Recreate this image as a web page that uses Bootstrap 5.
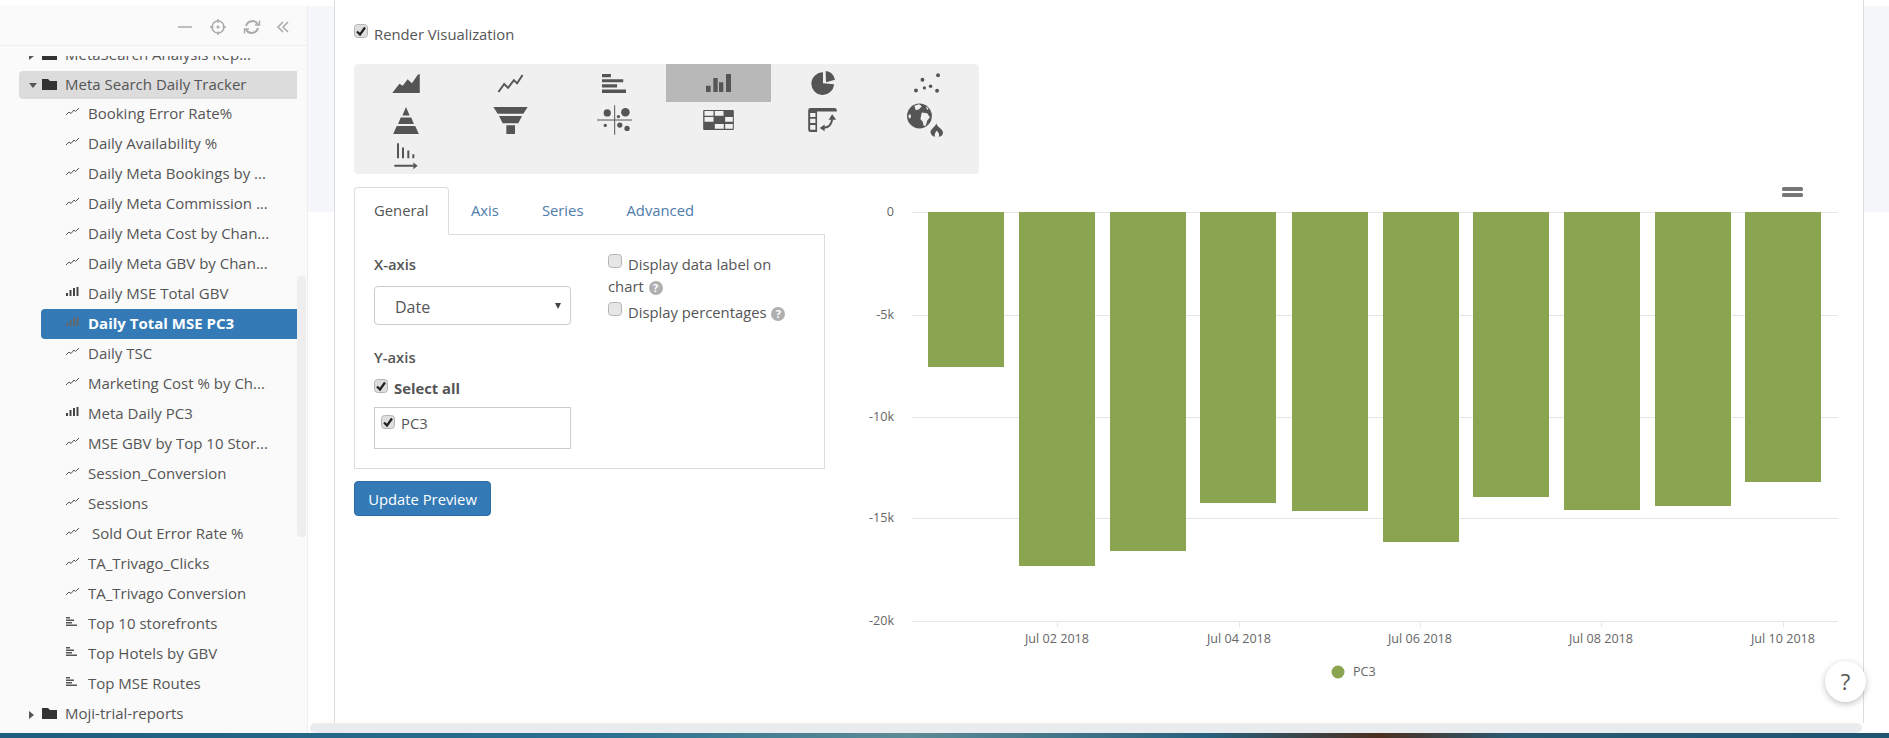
<!DOCTYPE html>
<html lang="en">
<head>
<meta charset="utf-8">
<title>Render Visualization</title>
<link href="https://cdn.jsdelivr.net/npm/bootstrap@5.3.0/dist/css/bootstrap.min.css" rel="stylesheet">
<style>
html,body{height:100%;overflow:hidden;}
body{font-family:"Open Sans","Noto Sans",sans-serif;font-size:14.8px;color:#555;background:#fff;}
.page-shell{height:738px;}
.upper{height:733px;}
.side-pane{width:308px;margin-top:6px;background:#fafafa;border-right:1px solid #eee;position:relative;}
.side-head{height:40px;border-bottom:1px solid #eee;padding:3px 17px 0 0;justify-content:flex-end;}
.side-head svg{display:block;}
.tree-clip{margin-top:10px;height:676px;width:297px;overflow:hidden;}
.tree-inner{margin-top:-16px;}
.tree-row{height:30px;color:#555;white-space:nowrap;font-size:15px;padding-bottom:2px;}
.folder-row{padding-left:10px;margin-left:19px;}
.folder-row.open{background:#dcdcdc;border-radius:4px 0 0 4px;height:28px;margin-top:1px;}
.caret-box{width:13px;flex:none;}
.folder-ico{margin-right:8px;flex:none;}
.leaf-row{padding-left:66px;}
.leaf-ico{width:13px;flex:none;margin-right:9px;margin-top:-3px;}
.leaf-ico.short-ico{width:11px;margin-right:11px;}
.leaf-row.picked{background:#337ab7;color:#fff;font-weight:700;border-radius:4px 0 0 4px;margin-left:41px;padding-left:25px;}
.pad-space{padding-left:4px;}
.side-thumb{position:absolute;left:297px;top:270px;width:9px;height:261px;background:#eee;border-radius:4px;}
.gutter{width:26px;margin-top:6px;flex:none;}
.gutter.end{width:25px;}
.band{height:206px;background:#f5f7fa;}
.main-pane{width:1530px;flex:none;border-left:1px solid #ddd;border-right:1px solid #ddd;padding:24px 0 0 19px;overflow:hidden;}
.render-row{height:20px;margin-bottom:20px;}
.render-row .form-check-input{margin:-6px 6px 0 0;}
.form-check-input{width:14px;height:14px;border:1px solid #b5b5b5;border-radius:3px;background-color:#e6e6e6;flex:none;box-shadow:none;}
.form-check-input:checked{background-color:#dedede;border-color:#b5b5b5;background-image:url("data:image/svg+xml,%3Csvg xmlns='http://www.w3.org/2000/svg' viewBox='0 0 14 14'%3E%3Cpath d='M3 7.500l3 3 5-7' fill='none' stroke='%23222' stroke-width='2.2'/%3E%3C/svg%3E");background-size:14px 14px;}
.type-panel{width:625px;height:110px;background:#f0f0f0;border-radius:4px;grid-template-columns:repeat(6,1fr);grid-template-rows:38px 36px 36px;margin-bottom:6px;display:grid;}
.type-cell{display:flex;align-items:center;justify-content:center;}
.type-cell.active-type{background:#b8b8b8;}
.type-cell svg{fill:#555;display:block;}
.globe-ico{margin-right:4px;}
.work-row{height:540px;}
.config-col{width:471px;flex:none;padding-top:7px;}
.nav-tabs{border-bottom:none;height:47px;margin-bottom:0;position:relative;z-index:1;}
.nav-tabs .nav-link{font-size:14.8px;color:#4f7bab;padding:11px 19px 0 19px;height:47px;border-radius:4px 4px 0 0;border:1px solid transparent;margin:0;}
.nav-tabs .nav-link.active{color:#555;border-color:#ddd #ddd #fff;width:95px;height:48px;background:#fff;}
.nav-tabs .nav-item.gap-tab{margin-left:2px;}
.nav-tabs .nav-item.gap-tab2{margin-left:3px;}
.tab-box{height:235px;border:1px solid #ddd;padding:19px;}
.left-form{width:197px;flex:none;}
.right-form{margin-left:37px;margin-top:-1px;width:190px;}
.field-title{font-weight:600;line-height:20px;color:#555;}
.axis-select{height:39px;border:1px solid #ccc;border-radius:4px;margin-top:12px;padding:2px 0 0 20px;font-size:16px;background:#fff;position:relative;}
.axis-select::after{content:"";position:absolute;right:9px;top:16px;border-left:3.5px solid transparent;border-right:3.5px solid transparent;border-top:6px solid #444;}
.y-title{margin-top:22px;}
.select-all{margin-top:13px;height:17px;font-weight:700;gap:6px;}
.select-all .form-check-input{margin:-5px 0 0 0;}
.series-box{height:42px;border:1px solid #ccc;margin-top:10px;padding:7px 6px;gap:6px;align-items:flex-start;}
.series-box .form-check-input{margin:0;}
.series-name{line-height:1;margin-top:1px;}
.opt-line{line-height:22px;}
.opt-line .form-check-input{margin:0 6px 0 0;vertical-align:-1px;position:relative;top:-3px;}
.opt-two{margin-top:4px;}
.help-dot{display:inline-block;width:14px;height:14px;border-radius:50%;background:#b0b0b0;color:#fff;font-size:11px;line-height:14px;font-weight:700;text-align:center;margin-left:1px;}
.btn-update{--bs-btn-bg:#337ab7;--bs-btn-border-color:#2e6da4;--bs-btn-hover-bg:#286090;font-size:14.8px;width:137px;height:35px;margin-top:12px;padding:1px 0 0;border-radius:4px;}
.chart-col{margin-left:35px;width:1000px;flex:none;}
.chart-col svg{display:block;}
.chart-col text{font-family:"Open Sans","Noto Sans",sans-serif;font-size:12.6px;fill:#666;}
.help-fab{position:absolute;left:1825px;top:661px;width:41px;height:41px;border-radius:50%;background:#fff;box-shadow:0 2px 6px rgba(0,0,0,.25);font-size:22px;color:#555;}
.h-scroll{height:10px;background:#e8ecef;border-top:1px solid #f5ecea;width:1552px;margin-left:2px;border-radius:5px;}
.right-stack{width:1581px;flex:none;}
.top-stack{height:723px;}
.photo-strip{height:5px;background:linear-gradient(90deg,#1d5d7d 0%,#2a7090 32%,#5d8b96 48%,#27607c 64%,#4a2f20 73%,#2b5a72 80%,#1d5470 100%);}
</style>
</head>
<body>
<div class="page-shell d-flex flex-column position-relative">
 <div class="upper d-flex">
  <aside class="side-pane flex-shrink-0">
   <div class="side-head d-flex align-items-center">
    <svg width="120" height="16" viewBox="0 0 120 16" fill="none" stroke="#aaa" stroke-width="1.5">
     <path d="M8 8h14"/>
     <circle cx="48" cy="8" r="6"/><path d="M48 6.500v3M46.500 8h3"/><path d="M48 0v3.500M48 12.500v3.500M40 8h3.500M52.500 8h3.500"/>
     <path d="M88 5.500A6.500 6.500 0 0 0 76 7M76 10.500A6.500 6.500 0 0 0 88 9" stroke-width="2"/><path d="M85 6h4.500V1.500M79 10h-4.500v4.500" stroke-width="1.500"/>
     <path d="M113 3l-5 5 5 5M118 3l-5 5 5 5"/>
    </svg>
   </div>
   <div class="tree-clip">
    <div class="tree-inner">
     <div class="tree-row folder-row d-flex align-items-center"><span class="caret-box"><svg width="6" height="8" viewBox="0 0 6 8"><path d="M0 0l5 4-5 4z" fill="#555"/></svg></span><svg class="folder-ico" width="15" height="12" viewBox="0 0 15 12"><path d="M0 1h6l2 2h7v9H0z" fill="#333"/></svg>MetaSearch Analysis Rep...</div>
     <div class="tree-row folder-row open d-flex align-items-center"><span class="caret-box"><svg width="8" height="6" viewBox="0 0 8 6"><path d="M0 0h8L4 5z" fill="#555"/></svg></span><svg class="folder-ico" width="15" height="12" viewBox="0 0 15 12"><path d="M0 1h6l2 2h7v9H0z" fill="#333"/></svg>Meta Search Daily Tracker</div>
     <div class="tree-row leaf-row d-flex align-items-center"><svg class="leaf-ico" width="13" height="8" viewBox="0 0 13 8" fill="none" stroke="#555"><path d="M0 7l3-3 2 1.500L8 2l1.500 1.500L13 0"/></svg>Booking Error Rate%</div>
     <div class="tree-row leaf-row d-flex align-items-center"><svg class="leaf-ico" width="13" height="8" viewBox="0 0 13 8" fill="none" stroke="#555"><path d="M0 7l3-3 2 1.500L8 2l1.500 1.500L13 0"/></svg>Daily Availability %</div>
     <div class="tree-row leaf-row d-flex align-items-center"><svg class="leaf-ico" width="13" height="8" viewBox="0 0 13 8" fill="none" stroke="#555"><path d="M0 7l3-3 2 1.500L8 2l1.500 1.500L13 0"/></svg>Daily Meta Bookings by ...</div>
     <div class="tree-row leaf-row d-flex align-items-center"><svg class="leaf-ico" width="13" height="8" viewBox="0 0 13 8" fill="none" stroke="#555"><path d="M0 7l3-3 2 1.500L8 2l1.500 1.500L13 0"/></svg>Daily Meta Commission ...</div>
     <div class="tree-row leaf-row d-flex align-items-center"><svg class="leaf-ico" width="13" height="8" viewBox="0 0 13 8" fill="none" stroke="#555"><path d="M0 7l3-3 2 1.500L8 2l1.500 1.500L13 0"/></svg>Daily Meta Cost by Chan...</div>
     <div class="tree-row leaf-row d-flex align-items-center"><svg class="leaf-ico" width="13" height="8" viewBox="0 0 13 8" fill="none" stroke="#555"><path d="M0 7l3-3 2 1.500L8 2l1.500 1.500L13 0"/></svg>Daily Meta GBV by Chan...</div>
     <div class="tree-row leaf-row d-flex align-items-center"><svg class="leaf-ico" width="13" height="9" viewBox="0 0 13 9" fill="#444"><path d="M0 6h2v3H0zM3.500 3h2v6h-2zM7 1h2v8H7zM10.500 0h2v9h-2z"/></svg>Daily MSE Total GBV</div>
     <div class="tree-row leaf-row picked d-flex align-items-center"><svg class="leaf-ico" width="13" height="9" viewBox="0 0 13 9" fill="#666"><path d="M0 6h2v3H0zM3.500 3h2v6h-2zM7 1h2v8H7zM10.500 0h2v9h-2z"/></svg>Daily Total MSE PC3</div>
     <div class="tree-row leaf-row d-flex align-items-center"><svg class="leaf-ico" width="13" height="8" viewBox="0 0 13 8" fill="none" stroke="#555"><path d="M0 7l3-3 2 1.500L8 2l1.500 1.500L13 0"/></svg>Daily TSC</div>
     <div class="tree-row leaf-row d-flex align-items-center"><svg class="leaf-ico" width="13" height="8" viewBox="0 0 13 8" fill="none" stroke="#555"><path d="M0 7l3-3 2 1.500L8 2l1.500 1.500L13 0"/></svg>Marketing Cost % by Ch...</div>
     <div class="tree-row leaf-row d-flex align-items-center"><svg class="leaf-ico" width="13" height="9" viewBox="0 0 13 9" fill="#444"><path d="M0 6h2v3H0zM3.500 3h2v6h-2zM7 1h2v8H7zM10.500 0h2v9h-2z"/></svg>Meta Daily PC3</div>
     <div class="tree-row leaf-row d-flex align-items-center"><svg class="leaf-ico" width="13" height="8" viewBox="0 0 13 8" fill="none" stroke="#555"><path d="M0 7l3-3 2 1.500L8 2l1.500 1.500L13 0"/></svg>MSE GBV by Top 10 Stor...</div>
     <div class="tree-row leaf-row d-flex align-items-center"><svg class="leaf-ico" width="13" height="8" viewBox="0 0 13 8" fill="none" stroke="#555"><path d="M0 7l3-3 2 1.500L8 2l1.500 1.500L13 0"/></svg>Session_Conversion</div>
     <div class="tree-row leaf-row d-flex align-items-center"><svg class="leaf-ico" width="13" height="8" viewBox="0 0 13 8" fill="none" stroke="#555"><path d="M0 7l3-3 2 1.500L8 2l1.500 1.500L13 0"/></svg>Sessions</div>
     <div class="tree-row leaf-row d-flex align-items-center"><svg class="leaf-ico" width="13" height="8" viewBox="0 0 13 8" fill="none" stroke="#555"><path d="M0 7l3-3 2 1.500L8 2l1.500 1.500L13 0"/></svg><span class="pad-space">Sold Out Error Rate %</span></div>
     <div class="tree-row leaf-row d-flex align-items-center"><svg class="leaf-ico" width="13" height="8" viewBox="0 0 13 8" fill="none" stroke="#555"><path d="M0 7l3-3 2 1.500L8 2l1.500 1.500L13 0"/></svg>TA_Trivago_Clicks</div>
     <div class="tree-row leaf-row d-flex align-items-center"><svg class="leaf-ico" width="13" height="8" viewBox="0 0 13 8" fill="none" stroke="#555"><path d="M0 7l3-3 2 1.500L8 2l1.500 1.500L13 0"/></svg>TA_Trivago Conversion</div>
     <div class="tree-row leaf-row d-flex align-items-center"><svg class="leaf-ico short-ico" width="11" height="9" viewBox="0 0 11 9" fill="#555"><path d="M0 0h4v1.500H0zM0 2.500h8V4H0zM0 5h6v1.500H0zM0 7.500h11V9H0z"/></svg>Top 10 storefronts</div>
     <div class="tree-row leaf-row d-flex align-items-center"><svg class="leaf-ico short-ico" width="11" height="9" viewBox="0 0 11 9" fill="#555"><path d="M0 0h4v1.500H0zM0 2.500h8V4H0zM0 5h6v1.500H0zM0 7.500h11V9H0z"/></svg>Top Hotels by GBV</div>
     <div class="tree-row leaf-row d-flex align-items-center"><svg class="leaf-ico short-ico" width="11" height="9" viewBox="0 0 11 9" fill="#555"><path d="M0 0h4v1.500H0zM0 2.500h8V4H0zM0 5h6v1.500H0zM0 7.500h11V9H0z"/></svg>Top MSE Routes</div>
     <div class="tree-row folder-row d-flex align-items-center"><span class="caret-box"><svg width="6" height="8" viewBox="0 0 6 8"><path d="M0 0l5 4-5 4z" fill="#555"/></svg></span><svg class="folder-ico" width="15" height="12" viewBox="0 0 15 12"><path d="M0 1h6l2 2h7v9H0z" fill="#333"/></svg>Moji-trial-reports</div>
    </div>
   </div>
   <div class="side-thumb"></div>
  </aside>
  <div class="right-stack d-flex flex-column">
   <div class="top-stack d-flex">
    <div class="gutter"><div class="band"></div></div>
    <main class="main-pane">
     <div class="render-row d-flex align-items-center">
      <input class="form-check-input" type="checkbox" checked aria-label="Render Visualization"><span>Render Visualization</span>
     </div>
     <div class="type-panel">
      <div class="type-cell"><svg width="28" height="19" viewBox="128 42 84 58"><path d="M128 100l22-28 10 6 15-20 13 12 18-26 6-2v58z"/></svg></div>
      <div class="type-cell"><svg width="27" height="19" viewBox="441 41 81 59"><path d="M444 97l18-25 12 12 18-24 10 10 17-26" fill="none" stroke="#555" stroke-width="6"/></svg></div>
      <div class="type-cell"><svg width="24" height="19" viewBox="755 43 70 55"><path d="M755 43h26v9h-26zM755 58h62v9h-62zM755 73h44v9h-44zM755 88h70v10h-70z"/></svg></div>
      <div class="type-cell active-type"><svg width="25" height="18" viewBox="168 43 75 54"><path d="M168 78h14v19h-14zM190 55h13v42h-13zM207 68h13v29h-13zM228 43h15v54h-15z"/></svg></div>
      <div class="type-cell"><svg width="24" height="24" viewBox="481 34 72 72"><path d="M517 38a34 34 0 1 0 33 36l-33-3zM525 34q22 2 28 26l-27 8z"/></svg></div>
      <div class="type-cell"><svg width="26" height="20" viewBox="789 40 80 60"><circle cx="863" cy="46" r="6"/><circle cx="815" cy="60" r="6"/><circle cx="840" cy="80" r="5.500"/><circle cx="821" cy="85" r="5"/><circle cx="795" cy="93" r="6"/><circle cx="860" cy="94" r="6"/></svg></div>
      <div class="type-cell"><svg width="26" height="27" viewBox="130 140 78 82"><path d="M169 140l11 26h-22zM153 172h32l8 20h-48zM141 198h56l11 24h-78z"/></svg></div>
      <div class="type-cell"><svg width="35" height="27" viewBox="430 145 103 81"><path d="M430 145h103l-13 20h-77zM447 172h69l-11 22h-47zM469 200h26v26h-26z"/></svg></div>
      <div class="type-cell"><svg width="35" height="30" viewBox="740 137 106 89"><path d="M792 137h3v89h-3zM740 180h106v3H740z"/><circle cx="771" cy="160" r="11"/><circle cx="826" cy="158" r="13"/><circle cx="805" cy="171" r="5"/><circle cx="765" cy="198" r="5"/><circle cx="809" cy="197" r="8"/><circle cx="831" cy="207" r="8"/></svg></div>
      <div class="type-cell"><svg width="31" height="20" viewBox="156 152 92 60"><rect x="156" y="152" width="92" height="60" rx="3"/><path fill="#f0f0f0" d="M160 155h27v14h-27zM191 155h26v14h-26zM160 173h27v14h-27zM222 173h23v14h-23zM191 194h27v14h-27zM222 194h23v14h-23z"/></svg></div>
      <div class="type-cell"><svg width="29" height="24" viewBox="468 145 87 73"><path d="M468 152q0-7 7-7h73q7 0 7 7v4h-60v62h-20q-7 0-7-7z"/><path fill="#f0f0f0" d="M474 160h16v12h-16zM474 178h16v13h-16zM474 197h16v14h-16z"/><path d="M516 205q22-1 25-26" fill="none" stroke="#555" stroke-width="6"/><path d="M503 206l15-11v21zM541 164l12 17h-23z"/></svg></div>
      <div class="type-cell"><svg class="globe-ico" width="36" height="34" viewBox="768 132 107 100"><circle cx="805" cy="170" r="37"/><path fill="#f0f0f0" d="M790 140l14-5 8 6-8 9-10 3zM812 160l16 2 8 12-8 10-4 14-6 2-4-14-6-6 2-12zM772 168l6-4 2 10-6 4zM824 142l8 6-4 4z"/><path d="M855 192C858 205 874 208 875 220 875 228 868 232 862 232 866 226 862 218 856 214 852 220 848 226 852 232 844 232 838 226 838 218 838 210 845 208 848 203 851 200 854 197 855 192z"/></svg></div>
      <div class="type-cell"><svg width="24" height="27" viewBox="129 255 72 80"><path d="M138 255h6v45h-6zM153 268h6v32h-6zM169 277h6v23h-6zM184 288h6v12h-6zM130 320h58v6h-58z"/><path d="M187 313l13 10-13 10z"/></svg></div>
     </div>
     <div class="work-row d-flex">
      <div class="config-col">
       <ul class="nav nav-tabs">
        <li class="nav-item"><a class="nav-link active" href="#">General</a></li>
        <li class="nav-item gap-tab"><a class="nav-link" href="#">Axis</a></li>
        <li class="nav-item gap-tab2"><a class="nav-link" href="#">Series</a></li>
        <li class="nav-item gap-tab2"><a class="nav-link" href="#">Advanced</a></li>
       </ul>
       <div class="tab-box d-flex">
        <div class="left-form">
         <div class="field-title">X-axis</div>
         <div class="axis-select d-flex align-items-center">Date</div>
         <div class="field-title y-title">Y-axis</div>
         <div class="select-all d-flex align-items-center"><input class="form-check-input" type="checkbox" checked aria-label="Select all"><span>Select all</span></div>
         <div class="series-box d-flex"><input class="form-check-input" type="checkbox" checked aria-label="PC3"><span class="series-name">PC3</span></div>
        </div>
        <div class="right-form">
         <div class="opt-line"><input class="form-check-input" type="checkbox" aria-label="Display data label on chart">Display data label on chart <span class="help-dot">?</span></div>
         <div class="opt-line opt-two"><input class="form-check-input" type="checkbox" aria-label="Display percentages">Display percentages <span class="help-dot">?</span></div>
        </div>
       </div>
       <button type="button" class="btn btn-primary btn-update">Update Preview</button>
      </div>
      <div class="chart-col">
       <svg width="1000" height="530" viewBox="860 180 1000 530">
        <g stroke="#e6e6e6" stroke-width="1">
         <path d="M912 212.500H1838M912 315.500H1838M912 417.500H1838M912 518.500H1838M912 621.500H1838"/>
         <path d="M1057.500 621v6M1239.500 621v6M1420.500 621v6M1601.500 621v6M1783.500 621v6"/>
        </g>
        <g fill="#8ba44f">
         <rect x="928" y="212" width="76" height="155"/>
         <rect x="1019" y="212" width="76" height="354"/>
         <rect x="1110" y="212" width="76" height="339"/>
         <rect x="1200" y="212" width="76" height="291"/>
         <rect x="1292" y="212" width="76" height="299"/>
         <rect x="1383" y="212" width="76" height="330"/>
         <rect x="1473" y="212" width="76" height="285"/>
         <rect x="1564" y="212" width="76" height="298"/>
         <rect x="1655" y="212" width="76" height="294"/>
         <rect x="1745" y="212" width="76" height="270"/>
        </g>
        <g fill="#777"><rect x="1782" y="187" width="21" height="4" rx="1.500"/><rect x="1782" y="193" width="21" height="4" rx="1.500"/></g>
        <g text-anchor="end">
         <text x="894" y="216">0</text><text x="894" y="319">-5k</text><text x="894" y="421">-10k</text><text x="894" y="522">-15k</text><text x="894" y="625">-20k</text>
        </g>
        <g text-anchor="middle">
         <text x="1057" y="643">Jul 02 2018</text><text x="1239" y="643">Jul 04 2018</text><text x="1420" y="643">Jul 06 2018</text><text x="1601" y="643">Jul 08 2018</text><text x="1783" y="643">Jul 10 2018</text>
        </g>
        <circle cx="1338" cy="672" r="6.500" fill="#8ba44f"/>
        <text x="1353" y="676">PC3</text>
       </svg>
      </div>
     </div>
    </main>
    <div class="gutter end"><div class="band"></div></div>
   </div>
   <div class="h-scroll"></div>
  </div>
 </div>
 <div class="photo-strip"></div>
 <div class="help-fab d-flex align-items-center justify-content-center">?</div>
</div>
<script src="https://cdn.jsdelivr.net/npm/bootstrap@5.3.0/dist/js/bootstrap.bundle.min.js"></script>
</body>
</html>
